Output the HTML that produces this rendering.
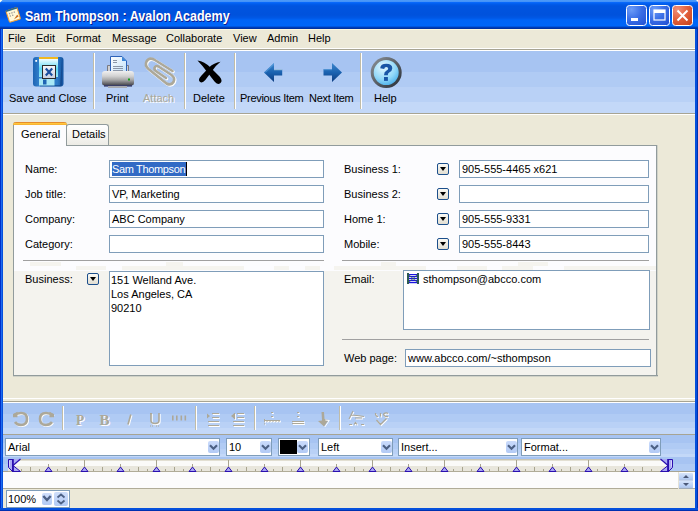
<!DOCTYPE html>
<html><head><meta charset="utf-8">
<style>
*{margin:0;padding:0;box-sizing:border-box}
html,body{width:698px;height:511px;overflow:hidden;background:#ECE9D8}
body{position:relative;font-family:"Liberation Sans",sans-serif;font-size:11px;color:#000}
.a{position:absolute}
.t{position:absolute;white-space:nowrap;line-height:13px}
/* title bar */
#title{left:0;top:0;width:698px;height:29px;background:linear-gradient(to bottom,#4C9AF8 0px,#4290F8 2px,#0A6CFF 2px,#005CEC 4px,#0054E0 6px,#0052DC 15px,#0058E6 18px,#0064F6 20px,#0066F8 26px,#0046C8 27px,#0034A4 28px,#0030A0 29px)}
#ttxt{left:25px;top:8px;font-weight:bold;font-size:14px;color:#fff;line-height:17px;text-shadow:1px 1px 0 #0A1A90;transform:scaleX(0.895);transform-origin:0 0}
.lb{left:0;top:29px;width:3px;height:482px;background:linear-gradient(to right,#0030C8 0,#0030C8 1px,#1D6CF0 1px,#1D6CF0 2px,#0550DC 2px)}
.rb{left:695px;top:29px;width:3px;height:482px;background:linear-gradient(to right,#0550DC 0,#0550DC 2px,#0030B0 2px)}
.bb{left:0;top:508px;width:698px;height:3px;background:linear-gradient(to bottom,#0550DC 0,#0550DC 2px,#0030B0 2px)}
/* menu */
#menu{left:3px;top:29px;width:692px;height:22px;background:#ECE9D8;border-top:1px solid #FFF8DC;border-left:1px solid #FFF8DC}
.mi{top:32px}
/* toolbar */
#tb{left:3px;top:48px;width:692px;height:67px;
 background:linear-gradient(to bottom,#fff 0,#fff 1px,#A7A493 1px,#A7A493 2px,#fff 2px,#fff 3px,#A7C4F2 3px,#A7C4F2 24px,#B0CBF4 24px,#B0CBF4 39px,#B9D1F6 39px,#B9D1F6 54px,#C3D8F8 54px,#C3D8F8 65px,#A7A493 65px,#A7A493 66px,#fff 66px)}
.sep{width:2px;background:linear-gradient(to right,#C0BCA8 0,#C0BCA8 1px,#fff 1px)}
.tl{top:92px}

/* tabs & panel */
#panel{left:13px;top:145px;width:645px;height:232px;border:1px solid #919B9C;border-right:none;border-bottom:none;
 background:linear-gradient(to bottom,#FCFCFE 0,#FCFCFE 125px,#F4F3EE 125px,#F4F3EE 100%)}
#pshadow{left:656px;top:145px;width:2px;height:232px;background:linear-gradient(to right,#919B9C 0,#919B9C 1px,#D0D2C8 1px)}
#pshadowb{left:13px;top:375px;width:645px;height:2px;background:linear-gradient(to bottom,#919B9C 0,#919B9C 1px,#D0D2C8 1px)}
#tab1{left:13px;top:122px;width:54px;height:24px;background:#FCFCFE;border-left:1px solid #919B9C;border-right:1px solid #919B9C;border-radius:3px 3px 0 0}
#tab1top{left:13px;top:122px;width:54px;height:3px;background:linear-gradient(to bottom,#E68B2C 0,#E68B2C 1px,#FFC73C 1px,#FFC73C 2px,#F8B334 2px);border-radius:3px 3px 0 0}
#tab2{left:66px;top:124px;width:43px;height:21px;border:1px solid #919B9C;border-bottom:none;border-radius:3px 3px 0 0;background:linear-gradient(to bottom,#fff,#ECEBE5)}
.lbl{line-height:13px}
.inp{position:absolute;border:1px solid #7F9DB9;background:#fff;height:18px}
.dd{position:absolute;width:12px;height:12px;border:1px solid #1C4F8C;border-radius:2px;background:linear-gradient(to bottom,#FAF9F4,#E2DED2)}
.dd:after{content:"";position:absolute;left:2px;top:3px;border-left:3px solid transparent;border-right:3px solid transparent;border-top:4px solid #000}
.hsep{position:absolute;height:1px;background:#A0A0A0;}

/* bottom toolbars */
#ftb{left:3px;top:398px;width:692px;height:37px;
 background:linear-gradient(to bottom,#fff 0,#fff 1px,#EEEBDC 1px,#EEEBDC 3px,#A7A493 3px,#A7A493 4px,#fff 4px,#fff 5px,#A7C4F2 5px,#A7C4F2 16px,#B0CBF4 16px,#B0CBF4 24px,#B9D1F6 24px,#B9D1F6 30px,#C3D8F8 30px,#C3D8F8 36px,#A7A493 36px)}
#ftb2{left:3px;top:435px;width:692px;height:22px;
 background:linear-gradient(to bottom,#A7C4F2 0,#A7C4F2 8px,#B0CBF4 8px,#B0CBF4 14px,#B9D1F6 14px,#B9D1F6 19px,#C3D8F8 19px)}
#ftb3{left:3px;top:457px;width:692px;height:15px;
 background:linear-gradient(to bottom,#A7C4F2 0,#A7C4F2 7px,#B0CBF4 7px,#B0CBF4 14px,#A7A493 14px)}
.cb{position:absolute;top:438px;height:18px;border:1px solid #7F9DB9;background:#fff}
.cbb{position:absolute;top:441px;width:11px;height:12px;border-radius:2px;background:linear-gradient(to bottom,#CADBFB,#B2CAF5)}
.cbb svg{position:absolute;left:0;top:0}
#ruler{left:8px;top:459px;width:660px;height:13px;background:linear-gradient(to bottom,#C9C5B3 0,#C9C5B3 1px,#E2DFD2 1px,#E2DFD2 2px,#FAFAF8 2px,#FAFAF8 7px,#E8E6DC 7px,#E8E6DC 12px,#B0AC98 12px)}
#txt{left:3px;top:472px;width:692px;height:17px;background:#FCFCFC;border-bottom:1px solid #B0AC98}
#zoom{left:6px;top:490px;width:64px;height:18px;border:1px solid #7F9DB9;background:#fff}
</style></head><body>
<div id="title" class="a"></div>
<div class="t" id="ttxt">Sam Thompson : Avalon Academy</div>
<div class="lb a"></div><div class="rb a"></div><div class="bb a"></div>

<div id="menu" class="a"></div>
<div class="t mi" style="left:8px">File</div>
<div class="t mi" style="left:36px">Edit</div>
<div class="t mi" style="left:66px">Format</div>
<div class="t mi" style="left:112px">Message</div>
<div class="t mi" style="left:166px">Collaborate</div>
<div class="t mi" style="left:233px">View</div>
<div class="t mi" style="left:267px">Admin</div>
<div class="t mi" style="left:308px">Help</div>

<div id="tb" class="a"></div>
<div class="a sep" style="left:93px;top:53px;height:56px"></div>
<div class="a sep" style="left:184px;top:53px;height:56px"></div>
<div class="a sep" style="left:234px;top:53px;height:56px"></div>
<div class="a sep" style="left:360px;top:53px;height:56px"></div>
<!--ICONS-->
<svg class="a" style="left:0;top:0" width="698" height="120">
 <defs>
  <linearGradient id="flop" x1="0" y1="0" x2="1" y2="0">
   <stop offset="0" stop-color="#1E64B4"/><stop offset="0.3" stop-color="#3A8ED6"/><stop offset="0.8" stop-color="#2C7AC6"/><stop offset="1" stop-color="#12509C"/>
  </linearGradient>
  <linearGradient id="lab" x1="0" y1="0" x2="0" y2="1">
   <stop offset="0" stop-color="#F4FCFF"/><stop offset="0.55" stop-color="#5CD8F4"/><stop offset="1" stop-color="#9AE6F6"/>
  </linearGradient>
  <linearGradient id="xbox" x1="0" y1="0" x2="0" y2="1">
   <stop offset="0" stop-color="#F6F6FA"/><stop offset="1" stop-color="#C8D0E0"/>
  </linearGradient>
  <linearGradient id="prb" x1="0" y1="0" x2="0" y2="1">
   <stop offset="0" stop-color="#F0F0F0"/><stop offset="0.35" stop-color="#D2D2D2"/><stop offset="0.62" stop-color="#A6A6A6"/><stop offset="0.85" stop-color="#6A6A6E"/><stop offset="1" stop-color="#404048"/>
  </linearGradient>
  <linearGradient id="paper" x1="0" y1="0" x2="1" y2="1">
   <stop offset="0" stop-color="#FFFFFF"/><stop offset="1" stop-color="#BFE0FA"/>
  </linearGradient>
  <linearGradient id="arr" x1="0" y1="0" x2="0" y2="1">
   <stop offset="0" stop-color="#3C86CC"/><stop offset="0.5" stop-color="#1A62B0"/><stop offset="1" stop-color="#0C3C80"/>
  </linearGradient>
  <radialGradient id="helpg" cx="0.4" cy="0.3" r="0.75">
   <stop offset="0" stop-color="#E6F8FF"/><stop offset="0.6" stop-color="#8ED6F8"/><stop offset="1" stop-color="#3AA6E6"/>
  </radialGradient>
  <linearGradient id="ring" x1="0" y1="0" x2="1" y2="1">
   <stop offset="0" stop-color="#8A9096"/><stop offset="1" stop-color="#2A3038"/>
  </linearGradient>
 </defs>
 <!-- app icon -->
 <g transform="rotate(-18 13 15)">
  <rect x="7.5" y="9" width="11.5" height="12" rx="1" fill="#FFF8D8" stroke="#F0A038" stroke-width="1.1"/>
  <rect x="7.5" y="8.5" width="11.5" height="1.6" fill="#2A6A8A"/>
  <g fill="#9A9A9A"><rect x="9.5" y="12" width="1.3" height="1.3"/><rect x="12" y="12" width="1.3" height="1.3"/><rect x="14.5" y="12" width="1.3" height="1.3"/><rect x="9.5" y="14.5" width="1.3" height="1.3"/><rect x="12" y="14.5" width="1.3" height="1.3"/></g>
  <path d="M12.5 19.5 L17 16 L18 18 Z" fill="#C86818"/>
 </g>
 <!-- floppy -->
 <rect x="33" y="57" width="30.5" height="29.5" rx="3" fill="url(#flop)"/>
 <path d="M62 60 V85 Q62 86.5 60 86.5 H40 V85 H60 Z" fill="#0E3E80" opacity="0.55"/>
 <rect x="39" y="59" width="19" height="18" fill="url(#lab)"/>
 <rect x="39" y="57" width="19" height="2" fill="#F0B822"/>
 <rect x="35.3" y="60" width="1.8" height="1.8" fill="#fff"/>
 <rect x="39" y="78.5" width="15.5" height="7" fill="#A8E8F6"/>
 <rect x="43" y="79.5" width="3.5" height="5" fill="#1E64B4"/>
 <rect x="42.5" y="65.5" width="13" height="13" fill="url(#xbox)" stroke="#2A2A2A" stroke-width="1"/>
 <path d="M45.8 68.6 L52.2 75.4 M52.2 68.6 L45.8 75.4" stroke="#1A4E9E" stroke-width="2.2"/>
 <!-- printer -->
 <rect x="107" y="65" width="22" height="9" rx="1" fill="#7A7A80"/>
 <rect x="108" y="66" width="20" height="7" fill="#CFCFD2"/>
 <path d="M110.5 56.5 H122 L126.5 61 V74 H110.5 Z" fill="url(#paper)" stroke="#2D62B8" stroke-width="1"/>
 <path d="M122 56.5 V61 H126.5 Z" fill="#3D86D6"/>
 <g fill="#8A96A8"><rect x="113" y="60" width="4" height="1"/><rect x="113" y="62" width="4" height="1"/><rect x="113" y="66" width="10" height="1"/><rect x="113" y="68" width="10" height="1"/><rect x="113" y="70" width="10" height="1"/><rect x="113" y="72" width="10" height="1"/></g>
 <path d="M102 74 Q102 71 105 71 H131 Q134 71 134 74 V83 Q134 85.5 131 85.5 H105 Q102 85.5 102 83 Z" fill="url(#prb)"/>
 <rect x="104" y="85" width="28" height="1.6" fill="#3A3E66"/>
 <rect x="108" y="86" width="19" height="2" fill="#A8AAB0"/>
 <rect x="128" y="78.5" width="2" height="2" fill="#18A018"/>
 <!-- attach (disabled clip) -->
 <g fill="none" stroke-linecap="round" stroke-linejoin="round">
  <path d="M172.5 71 L154 59.5 Q149 57 146.5 61.5 Q144.5 65.5 148.5 69 L166.5 83.5 Q171 86 173.5 82 Q175.5 78 171.5 75 L158.5 66.5 Q155.5 65 154.5 68 Q154 70 156.5 71.5 L166 78" stroke="#fff" stroke-width="3" transform="translate(0.8,0.8)"/>
  <path d="M172.5 71 L154 59.5 Q149 57 146.5 61.5 Q144.5 65.5 148.5 69 L166.5 83.5 Q171 86 173.5 82 Q175.5 78 171.5 75 L158.5 66.5 Q155.5 65 154.5 68 Q154 70 156.5 71.5 L166 78" stroke="#ACA899" stroke-width="2.6"/>
 </g>
 <!-- delete X -->
 <path d="M197.5 60.5 Q204.5 61.5 210.5 67.5 L219.5 76.5 Q223 80.5 220.5 83 Q217.5 85.5 214.5 81.5 L207.5 72.5 Q202.5 65.5 197.5 60.5 Z" fill="#000"/>
 <path d="M220.5 61.8 Q214 62.8 209 67.5 L201.5 75.5 Q197.5 79.5 199.8 81.8 Q202.3 83.8 205.3 80 L211.5 71.8 Q215.5 65.5 220.5 61.8 Z" fill="#000"/>
 <!-- prev arrow -->
 <path d="M264 72.5 L274 63 V69.2 H282.2 V75.6 H274 V82 Z" fill="url(#arr)"/>
 <path d="M264 72.5 L274 63 V65 L266 72.5 Z" fill="#5AA0E0" opacity="0.6"/>
 <rect x="274" y="69.2" width="8.2" height="1" fill="#D8E8F0" opacity="0.7"/>
 <!-- next arrow -->
 <path d="M342 72.5 L332 63 V69.2 H323.5 V75.6 H332 V82 Z" fill="url(#arr)"/>
 <rect x="323.5" y="69.2" width="8.5" height="1" fill="#5AA0E0" opacity="0.6"/>
 <!-- help -->
 <circle cx="386.2" cy="72.6" r="14" fill="url(#helpg)" stroke="url(#ring)" stroke-width="3"/>
 <path d="M380.2 68.2 Q380.5 63.8 386.3 63.8 Q392.3 63.8 392.3 68.3 Q392.3 71 389.2 72.6 Q387.8 73.5 387.8 75.2 H384 Q384 72 386.6 70.6 Q388.2 69.8 388.2 68.5 Q388.2 67 386.3 67 Q384.5 67 384.2 69 Z" fill="#1A56A6"/>
 <rect x="384" y="77" width="3.9" height="3.9" fill="#1A56A6"/>
</svg>
<!--/ICONS-->
<div class="t tl" style="left:9px">Save and Close</div>
<div class="t tl" style="left:106px">Print</div>
<div class="t tl" style="left:143px;color:#ACA899;text-shadow:1px 1px 0 #fff">Attach</div>
<div class="t tl" style="left:193px">Delete</div>
<div class="t tl" style="left:240px;letter-spacing:-0.3px">Previous Item</div>
<div class="t tl" style="left:309px;letter-spacing:-0.3px">Next Item</div>
<div class="t tl" style="left:374px">Help</div>


<div id="tab2" class="a"></div>
<div class="t" style="left:72px;top:128px">Details</div>
<div id="panel" class="a"></div>
<div id="pshadow" class="a"></div>
<div id="pshadowb" class="a"></div>
<!--BLK--><div class="a" style="left:30px;top:262px;width:31px;height:4px;background:#F5F4EF"></div><div class="a" style="left:166px;top:262px;width:17px;height:4px;background:#F5F4EF"></div><div class="a" style="left:381px;top:262px;width:15px;height:4px;background:#F5F4EF"></div><div class="a" style="left:518px;top:262px;width:30px;height:4px;background:#F5F4EF"></div><div class="a" style="left:76px;top:266px;width:30px;height:4px;background:#F5F4EF"></div><div class="a" style="left:122px;top:266px;width:122px;height:4px;background:#F5F4EF"></div><div class="a" style="left:274px;top:266px;width:15px;height:4px;background:#F5F4EF"></div><div class="a" style="left:305px;top:266px;width:15px;height:4px;background:#F5F4EF"></div><div class="a" style="left:334px;top:266px;width:92px;height:4px;background:#F5F4EF"></div><div class="a" style="left:457px;top:266px;width:30px;height:4px;background:#F5F4EF"></div><div class="a" style="left:502px;top:266px;width:31px;height:4px;background:#F5F4EF"></div><div class="a" style="left:564px;top:266px;width:92px;height:4px;background:#F5F4EF"></div><!--/BLK-->
<div id="tab1" class="a"></div>
<div id="tab1top" class="a"></div>
<div class="t" style="left:21px;top:128px">General</div>

<div class="t" style="left:25px;top:163px">Name:</div>
<div class="t" style="left:25px;top:188px">Job title:</div>
<div class="t" style="left:25px;top:213px">Company:</div>
<div class="t" style="left:25px;top:238px">Category:</div>
<div class="inp" style="left:109px;top:160px;width:215px"></div>
<div class="a" style="left:112px;top:162px;width:74px;height:14px;background:#316AC5"></div>
<div class="a" style="left:186px;top:162px;width:1px;height:14px;background:#000"></div>
<div class="t" style="left:112px;top:163px;color:#fff;letter-spacing:-0.35px">Sam Thompson</div>
<div class="inp" style="left:109px;top:185px;width:215px"></div>
<div class="t" style="left:112px;top:188px">VP, Marketing</div>
<div class="inp" style="left:109px;top:210px;width:215px"></div>
<div class="t" style="left:112px;top:213px">ABC Company</div>
<div class="inp" style="left:109px;top:235px;width:215px"></div>

<div class="t" style="left:344px;top:163px">Business 1:</div>
<div class="t" style="left:344px;top:188px">Business 2:</div>
<div class="t" style="left:344px;top:213px">Home 1:</div>
<div class="t" style="left:344px;top:238px">Mobile:</div>
<div class="dd" style="left:437px;top:163px"></div>
<div class="dd" style="left:437px;top:188px"></div>
<div class="dd" style="left:437px;top:213px"></div>
<div class="dd" style="left:437px;top:238px"></div>
<div class="inp" style="left:459px;top:160px;width:190px"></div>
<div class="t" style="left:462px;top:163px">905-555-4465 x621</div>
<div class="inp" style="left:459px;top:185px;width:190px"></div>
<div class="inp" style="left:459px;top:210px;width:190px"></div>
<div class="t" style="left:462px;top:213px">905-555-9331</div>
<div class="inp" style="left:459px;top:235px;width:190px"></div>
<div class="t" style="left:462px;top:238px">905-555-8443</div>

<div class="hsep" style="left:23px;top:260px;width:301px"></div>
<div class="hsep" style="left:342px;top:260px;width:307px"></div>

<div class="t" style="left:25px;top:273px">Business:</div>
<div class="dd" style="left:87px;top:273px"></div>
<div class="inp" style="left:109px;top:271px;width:215px;height:95px"></div>
<div class="t" style="left:111px;top:273px;line-height:14px">151 Welland Ave.<br>Los Angeles, CA<br>90210</div>

<div class="t" style="left:344px;top:273px">Email:</div>
<div class="inp" style="left:403px;top:270px;width:247px;height:60px"></div>
<div class="t" style="left:423px;top:273px">sthompson@abcco.com</div>
<div class="hsep" style="left:342px;top:339px;width:307px"></div>
<div class="t" style="left:344px;top:352px">Web page:</div>
<div class="inp" style="left:405px;top:349px;width:246px"></div>
<div class="t" style="left:408px;top:352px">www.abcco.com/~sthompson</div>

<div id="ftb" class="a"></div>
<div id="ftb2" class="a"></div>
<div id="ftb3" class="a"></div>
<div class="a sep" style="left:62px;top:406px;height:24px"></div>
<div class="a sep" style="left:195px;top:406px;height:24px"></div>
<div class="a sep" style="left:254px;top:406px;height:24px"></div>
<div class="a sep" style="left:339px;top:406px;height:24px"></div>
<div class="cb" style="left:5px;width:215px"></div>
<div class="t" style="left:8px;top:441px">Arial</div>
<div class="cbb" style="left:208px"><svg width="11" height="12"><path d="M2 4.2 L5.5 7.7 L9 4.2" stroke="#4D6185" stroke-width="2.2" fill="none"/></svg></div>
<div class="cb" style="left:226px;width:46px"></div>
<div class="t" style="left:229px;top:441px">10</div>
<div class="cbb" style="left:260px"><svg width="11" height="12"><path d="M2 4.2 L5.5 7.7 L9 4.2" stroke="#4D6185" stroke-width="2.2" fill="none"/></svg></div>
<div class="cb" style="left:278px;width:32px"></div>
<div class="a" style="left:280px;top:440px;width:17px;height:14px;background:#000"></div>
<div class="cbb" style="left:297px"><svg width="11" height="12"><path d="M2 4.2 L5.5 7.7 L9 4.2" stroke="#4D6185" stroke-width="2.2" fill="none"/></svg></div>
<div class="cb" style="left:318px;width:75px"></div>
<div class="t" style="left:321px;top:441px">Left</div>
<div class="cbb" style="left:381px"><svg width="11" height="12"><path d="M2 4.2 L5.5 7.7 L9 4.2" stroke="#4D6185" stroke-width="2.2" fill="none"/></svg></div>
<div class="cb" style="left:398px;width:120px"></div>
<div class="t" style="left:401px;top:441px">Insert...</div>
<div class="cbb" style="left:506px"><svg width="11" height="12"><path d="M2 4.2 L5.5 7.7 L9 4.2" stroke="#4D6185" stroke-width="2.2" fill="none"/></svg></div>
<div class="cb" style="left:521px;width:140px"></div>
<div class="t" style="left:524px;top:441px">Format...</div>
<div class="cbb" style="left:649px"><svg width="11" height="12"><path d="M2 4.2 L5.5 7.7 L9 4.2" stroke="#4D6185" stroke-width="2.2" fill="none"/></svg></div>
<div id="ruler" class="a"></div>
<!--RULER--><svg class="a" style="left:0;top:455px" width="698" height="20"><rect x="21" y="14" width="1" height="2" fill="#A8A48F"/><rect x="30" y="12" width="1" height="4" fill="#A8A48F"/><rect x="39" y="14" width="1" height="2" fill="#A8A48F"/><rect x="57" y="14" width="1" height="2" fill="#A8A48F"/><rect x="66" y="12" width="1" height="4" fill="#A8A48F"/><rect x="75" y="14" width="1" height="2" fill="#A8A48F"/><rect x="93" y="14" width="1" height="2" fill="#A8A48F"/><rect x="102" y="12" width="1" height="4" fill="#A8A48F"/><rect x="111" y="14" width="1" height="2" fill="#A8A48F"/><rect x="129" y="14" width="1" height="2" fill="#A8A48F"/><rect x="138" y="12" width="1" height="4" fill="#A8A48F"/><rect x="147" y="14" width="1" height="2" fill="#A8A48F"/><rect x="165" y="14" width="1" height="2" fill="#A8A48F"/><rect x="174" y="12" width="1" height="4" fill="#A8A48F"/><rect x="183" y="14" width="1" height="2" fill="#A8A48F"/><rect x="201" y="14" width="1" height="2" fill="#A8A48F"/><rect x="210" y="12" width="1" height="4" fill="#A8A48F"/><rect x="219" y="14" width="1" height="2" fill="#A8A48F"/><rect x="237" y="14" width="1" height="2" fill="#A8A48F"/><rect x="246" y="12" width="1" height="4" fill="#A8A48F"/><rect x="255" y="14" width="1" height="2" fill="#A8A48F"/><rect x="273" y="14" width="1" height="2" fill="#A8A48F"/><rect x="282" y="12" width="1" height="4" fill="#A8A48F"/><rect x="291" y="14" width="1" height="2" fill="#A8A48F"/><rect x="309" y="14" width="1" height="2" fill="#A8A48F"/><rect x="318" y="12" width="1" height="4" fill="#A8A48F"/><rect x="327" y="14" width="1" height="2" fill="#A8A48F"/><rect x="345" y="14" width="1" height="2" fill="#A8A48F"/><rect x="354" y="12" width="1" height="4" fill="#A8A48F"/><rect x="363" y="14" width="1" height="2" fill="#A8A48F"/><rect x="381" y="14" width="1" height="2" fill="#A8A48F"/><rect x="390" y="12" width="1" height="4" fill="#A8A48F"/><rect x="399" y="14" width="1" height="2" fill="#A8A48F"/><rect x="417" y="14" width="1" height="2" fill="#A8A48F"/><rect x="426" y="12" width="1" height="4" fill="#A8A48F"/><rect x="435" y="14" width="1" height="2" fill="#A8A48F"/><rect x="453" y="14" width="1" height="2" fill="#A8A48F"/><rect x="462" y="12" width="1" height="4" fill="#A8A48F"/><rect x="471" y="14" width="1" height="2" fill="#A8A48F"/><rect x="489" y="14" width="1" height="2" fill="#A8A48F"/><rect x="498" y="12" width="1" height="4" fill="#A8A48F"/><rect x="507" y="14" width="1" height="2" fill="#A8A48F"/><rect x="525" y="14" width="1" height="2" fill="#A8A48F"/><rect x="534" y="12" width="1" height="4" fill="#A8A48F"/><rect x="543" y="14" width="1" height="2" fill="#A8A48F"/><rect x="561" y="14" width="1" height="2" fill="#A8A48F"/><rect x="570" y="12" width="1" height="4" fill="#A8A48F"/><rect x="579" y="14" width="1" height="2" fill="#A8A48F"/><rect x="597" y="14" width="1" height="2" fill="#A8A48F"/><rect x="606" y="12" width="1" height="4" fill="#A8A48F"/><rect x="615" y="14" width="1" height="2" fill="#A8A48F"/><rect x="633" y="14" width="1" height="2" fill="#A8A48F"/><rect x="642" y="12" width="1" height="4" fill="#A8A48F"/><rect x="651" y="14" width="1" height="2" fill="#A8A48F"/><rect x="48" y="9" width="1" height="3" fill="#A8A48F"/><path d="M48.5 12 L52 16.5 L45 16.5 Z" fill="#A9A7F2" stroke="#2A0FB0" stroke-width="1"/><rect x="84" y="5" width="1" height="7" fill="#A8A48F"/><path d="M84.5 12 L88 16.5 L81 16.5 Z" fill="#A9A7F2" stroke="#2A0FB0" stroke-width="1"/><rect x="120" y="9" width="1" height="3" fill="#A8A48F"/><path d="M120.5 12 L124 16.5 L117 16.5 Z" fill="#A9A7F2" stroke="#2A0FB0" stroke-width="1"/><rect x="156" y="5" width="1" height="7" fill="#A8A48F"/><path d="M156.5 12 L160 16.5 L153 16.5 Z" fill="#A9A7F2" stroke="#2A0FB0" stroke-width="1"/><rect x="192" y="9" width="1" height="3" fill="#A8A48F"/><path d="M192.5 12 L196 16.5 L189 16.5 Z" fill="#A9A7F2" stroke="#2A0FB0" stroke-width="1"/><rect x="228" y="5" width="1" height="7" fill="#A8A48F"/><path d="M228.5 12 L232 16.5 L225 16.5 Z" fill="#A9A7F2" stroke="#2A0FB0" stroke-width="1"/><rect x="264" y="9" width="1" height="3" fill="#A8A48F"/><path d="M264.5 12 L268 16.5 L261 16.5 Z" fill="#A9A7F2" stroke="#2A0FB0" stroke-width="1"/><rect x="300" y="5" width="1" height="7" fill="#A8A48F"/><path d="M300.5 12 L304 16.5 L297 16.5 Z" fill="#A9A7F2" stroke="#2A0FB0" stroke-width="1"/><rect x="336" y="9" width="1" height="3" fill="#A8A48F"/><path d="M336.5 12 L340 16.5 L333 16.5 Z" fill="#A9A7F2" stroke="#2A0FB0" stroke-width="1"/><rect x="372" y="5" width="1" height="7" fill="#A8A48F"/><path d="M372.5 12 L376 16.5 L369 16.5 Z" fill="#A9A7F2" stroke="#2A0FB0" stroke-width="1"/><rect x="408" y="9" width="1" height="3" fill="#A8A48F"/><path d="M408.5 12 L412 16.5 L405 16.5 Z" fill="#A9A7F2" stroke="#2A0FB0" stroke-width="1"/><rect x="444" y="5" width="1" height="7" fill="#A8A48F"/><path d="M444.5 12 L448 16.5 L441 16.5 Z" fill="#A9A7F2" stroke="#2A0FB0" stroke-width="1"/><rect x="480" y="9" width="1" height="3" fill="#A8A48F"/><path d="M480.5 12 L484 16.5 L477 16.5 Z" fill="#A9A7F2" stroke="#2A0FB0" stroke-width="1"/><rect x="516" y="5" width="1" height="7" fill="#A8A48F"/><path d="M516.5 12 L520 16.5 L513 16.5 Z" fill="#A9A7F2" stroke="#2A0FB0" stroke-width="1"/><rect x="552" y="9" width="1" height="3" fill="#A8A48F"/><path d="M552.5 12 L556 16.5 L549 16.5 Z" fill="#A9A7F2" stroke="#2A0FB0" stroke-width="1"/><rect x="588" y="5" width="1" height="7" fill="#A8A48F"/><path d="M588.5 12 L592 16.5 L585 16.5 Z" fill="#A9A7F2" stroke="#2A0FB0" stroke-width="1"/><rect x="624" y="9" width="1" height="3" fill="#A8A48F"/><path d="M624.5 12 L628 16.5 L621 16.5 Z" fill="#A9A7F2" stroke="#2A0FB0" stroke-width="1"/><path d="M8.5 4.5 H12.5 V16.5 L8.5 12.5 Z" fill="#ABA9F3" stroke="#2A0FB0" stroke-width="1"/><path d="M13 4 H20.5 L13 10.5 Z" fill="#ABA9F3"/><path d="M20.5 4 L13 10.5" stroke="#2A0FB0" stroke-width="1.2"/><path d="M13 10.5 L20.5 16.5 H13 Z" fill="#ABA9F3" stroke="#2A0FB0" stroke-width="1"/><rect x="12" y="4" width="1.8" height="13" fill="#2A0FB0"/><path d="M9.5 5.5 V11.5" stroke="#D8D6FA" stroke-width="1"/><g transform="translate(681 0) scale(-1 1)"><path d="M8.5 4.5 H12.5 V16.5 L8.5 12.5 Z" fill="#ABA9F3" stroke="#2A0FB0" stroke-width="1"/><path d="M13 4 H20.5 L13 10.5 Z" fill="#ABA9F3"/><path d="M20.5 4 L13 10.5" stroke="#2A0FB0" stroke-width="1.2"/><path d="M13 10.5 L20.5 16.5 H13 Z" fill="#ABA9F3" stroke="#2A0FB0" stroke-width="1"/><rect x="12" y="4" width="1.8" height="13" fill="#2A0FB0"/><path d="M9.5 5.5 V11.5" stroke="#D8D6FA" stroke-width="1"/></g></svg><!--/RULER-->
<div id="txt" class="a"></div>
<div id="zoom" class="a"></div>
<div class="t" style="left:8px;top:493px">100%</div>

<!--ICONS2-->
<svg class="a" style="left:600px;top:0" width="98" height="29">
 <defs>
  <radialGradient id="bmin" cx="0.25" cy="0.2" r="1">
   <stop offset="0" stop-color="#6C9CF8"/><stop offset="0.5" stop-color="#3A6EE6"/><stop offset="1" stop-color="#2453D4"/>
  </radialGradient>
  <radialGradient id="bcl" cx="0.25" cy="0.2" r="1">
   <stop offset="0" stop-color="#F0907A"/><stop offset="0.5" stop-color="#E2603C"/><stop offset="1" stop-color="#C8431C"/>
  </radialGradient>
 </defs>
 <rect x="26.5" y="5.5" width="20" height="20" rx="3" fill="url(#bmin)" stroke="#fff" stroke-width="1"/>
 <rect x="31" y="18" width="7" height="3" fill="#fff"/>
 <rect x="49.5" y="5.5" width="20" height="20" rx="3" fill="url(#bmin)" stroke="#fff" stroke-width="1"/>
 <rect x="54" y="10" width="11" height="10" fill="none" stroke="#fff" stroke-width="1.2"/>
 <rect x="54" y="10" width="11" height="3" fill="#fff"/>
 <rect x="72.5" y="5.5" width="20" height="20" rx="3" fill="url(#bcl)" stroke="#fff" stroke-width="1"/>
 <path d="M77.5 10.5 L87.5 20.5 M87.5 10.5 L77.5 20.5" stroke="#fff" stroke-width="2"/>
 <path d="M96 0 H98 V2 Z" fill="#FFFFF0"/>
</svg>
<svg class="a" style="left:0;top:0" width="4" height="4"><path d="M0 0 H2.5 L0 2.5 Z" fill="#FFFFF0"/></svg>
<svg class="a" style="left:0;top:400px" width="400" height="35">
 <g fill="none" stroke-width="2.6">
  <g transform="translate(0.8 0.8)" stroke="#fff">
   <path d="M14 415.5 Q17 413 21 413 Q27 413 27 419 Q27 425 21 425 Q17 425 15 422" transform="translate(0,-400)"/>
   <path d="M53 415.5 Q50 413 46 413 Q40 413 40 419 Q40 425 46 425 Q50 425 52 422" transform="translate(0,-400)"/>
  </g>
  <g stroke="#ACA899">
   <path d="M14 415.5 Q17 413 21 413 Q27 413 27 419 Q27 425 21 425 Q17 425 15 422" transform="translate(0,-400)"/>
   <path d="M53 415.5 Q50 413 46 413 Q40 413 40 419 Q40 425 46 425 Q50 425 52 422" transform="translate(0,-400)"/>
  </g>
 </g>
 <path d="M13 14 L17.5 11.8 L17.5 17.2 L13 17.2 Z M54 14 L49.5 11.8 L49.5 17.2 L54 17.2 Z" fill="#ACA899"/>
 <g font-family="Liberation Serif" font-weight="bold" fill="#ACA899" style="text-shadow:1px 1px 0 #fff">
  <text x="76" y="24.6" font-size="15" transform="translate(76 0) scale(0.9 1) translate(-76 0)">P</text>
  <text x="99.5" y="24.6" font-size="15">B</text>
 </g>
 <g fill="none" stroke-width="1.6">
  <g stroke="#fff" transform="translate(0.9 0.9)">
   <path d="M130.8 14.5 L128 24.5"/>
   <path d="M151 13 V20.5 Q151 23.5 155 23.5 Q159 23.5 159 20.5 V13"/>
  </g>
  <g stroke="#ACA899">
   <path d="M130.8 14.5 L128 24.5"/>
   <path d="M151 13 V20.5 Q151 23.5 155 23.5 Q159 23.5 159 20.5 V13"/>
  </g>
 </g>
 <g fill="#ACA899">
  <rect x="150" y="13" width="2" height="1.2"/>
  <rect x="150" y="25.5" width="1" height="1"/><rect x="152" y="25.5" width="1" height="1"/><rect x="156" y="25.5" width="1" height="1"/><rect x="158" y="25.5" width="1" height="1"/>
  <rect x="172" y="15.5" width="1.6" height="5"/><rect x="176" y="15.5" width="1.6" height="5"/><rect x="180.5" y="15.5" width="1.6" height="5"/><rect x="184.5" y="15.5" width="1.6" height="5"/>
 </g>
 <g fill="none">
 <g stroke="#fff" transform="translate(0.9 0.9)"><path d="M212 13.5 H219 M212 17.5 H219 M208 21.5 H219 M208 25.5 H219 M237 13.5 H244 M237 17.5 H244 M233 21.5 H244 M233 25.5 H244 M234.5 13 V19 M271 12.5 H273 M271 16.5 H273 M264 20.5 H280 M297 12.5 H299 M297 16.5 H299 M292 21.5 H304 M292 23.5 H304 M349 24.5 H352 M361 24.5 H364 M354 24.5 L355.5 22.5 L357 24.5 M353 11 L349 19 M351 15 L357 15.5 L364 16.5 M355 18 L362 18" stroke-width="1.1"/>
 <path d="M375.5 13 Q375.5 16.5 378 16.5 M380.5 13 V16.5 M383.5 14 Q386 12 388 13.5 M383.5 14 Q384 17 388 16.5 M376.5 20 L380.5 24.5 L386.5 18.5" stroke-width="1.3"/>
 <path d="M264.5 19 V25 M267 21 V22 M270 21 V22 M273 21 V22 M276 21 V22 M279 21 V22" stroke-width="1" stroke-dasharray="1 1.2"/></g>
 <g stroke="#ACA899"><path d="M212 13.5 H219 M212 17.5 H219 M208 21.5 H219 M208 25.5 H219 M237 13.5 H244 M237 17.5 H244 M233 21.5 H244 M233 25.5 H244 M234.5 13 V19 M271 12.5 H273 M271 16.5 H273 M264 20.5 H280 M297 12.5 H299 M297 16.5 H299 M292 21.5 H304 M292 23.5 H304 M349 24.5 H352 M361 24.5 H364 M354 24.5 L355.5 22.5 L357 24.5 M353 11 L349 19 M351 15 L357 15.5 L364 16.5 M355 18 L362 18" stroke-width="1.1"/>
 <path d="M375.5 13 Q375.5 16.5 378 16.5 M380.5 13 V16.5 M383.5 14 Q386 12 388 13.5 M383.5 14 Q384 17 388 16.5 M376.5 20 L380.5 24.5 L386.5 18.5" stroke-width="1.3"/>
 <path d="M264.5 19 V25 M267 21 V22 M270 21 V22 M273 21 V22 M276 21 V22 M279 21 V22" stroke-width="1" stroke-dasharray="1 1.2"/></g>
 <g fill="#ACA899"><path d="M207 13.5 L210 16 L207 18.5 Z M234 13.5 L231 16 L234 18.5 Z"/>
 <path d="M321.5 12 L324 12 L324.5 19 L328.5 20 L324 26.5 L318 21 L322 20.5 Z"/></g>
 <path d="M324.5 19.5 L328.5 20 L324 26.5" stroke="#fff" stroke-width="1" fill="none" transform="translate(0.8 0.5)"/>
</g>
</svg>
<!--/ICONS2-->
<!--ICONS3-->
<svg class="a" style="left:400px;top:268px" width="30" height="20">
 <rect x="7" y="5" width="2" height="11" fill="#2C5A52"/>
 <rect x="17" y="5" width="2" height="11" fill="#2C5A52"/>
 <g fill="#1A14E0"><rect x="9" y="6" width="8" height="1.2"/><rect x="9" y="8" width="8" height="1.2"/><rect x="9" y="10" width="8" height="1.2"/><rect x="9" y="12" width="8" height="1.2"/><rect x="9" y="14" width="8" height="1.2"/></g>
 <path d="M9 7 L13 10.5 L17 7 M9 14 L13 10.5 L17 14" stroke="#2C5A52" stroke-width="0.8" fill="none"/>
</svg>
<svg class="a" style="left:676px;top:471px" width="20" height="19">
 <defs><linearGradient id="spg" x1="0" y1="0" x2="0" y2="1"><stop offset="0" stop-color="#D6E4FA"/><stop offset="1" stop-color="#AFC8F2"/></linearGradient></defs>
 <rect x="3" y="2" width="14" height="6.5" rx="1" fill="url(#spg)"/>
 <rect x="3" y="8.5" width="14" height="1" fill="#8EAADA"/>
 <rect x="3" y="10" width="14" height="6.5" rx="1" fill="url(#spg)"/>
 <rect x="3" y="16.5" width="14" height="1" fill="#8EAADA"/>
 <path d="M7 7 L10 4 L13 7 Z M7 12 L10 15 L13 12 Z" fill="#4A5878"/>
 <rect x="2" y="1" width="1" height="17" fill="#E4E2D6"/>
</svg>
<svg class="a" style="left:40px;top:491px" width="30" height="16">
 <defs><linearGradient id="zg" x1="0" y1="0" x2="0" y2="1"><stop offset="0" stop-color="#CFDEFA"/><stop offset="1" stop-color="#B2CAF4"/></linearGradient></defs>
 <rect x="2" y="2" width="10" height="12" rx="2" fill="url(#zg)"/>
 <path d="M3.3 5 L7 9 L10.7 5" stroke="#4D6185" stroke-width="2.4" fill="none"/>
 <rect x="14" y="1" width="14" height="14" rx="2" fill="url(#zg)"/>
 <path d="M17.5 6.5 L21 3.5 L24.5 6.5 M17.5 9.5 L21 12.5 L24.5 9.5" stroke="#4D6185" stroke-width="1.8" fill="none"/>
</svg>
<!--/ICONS3-->
</body></html>
